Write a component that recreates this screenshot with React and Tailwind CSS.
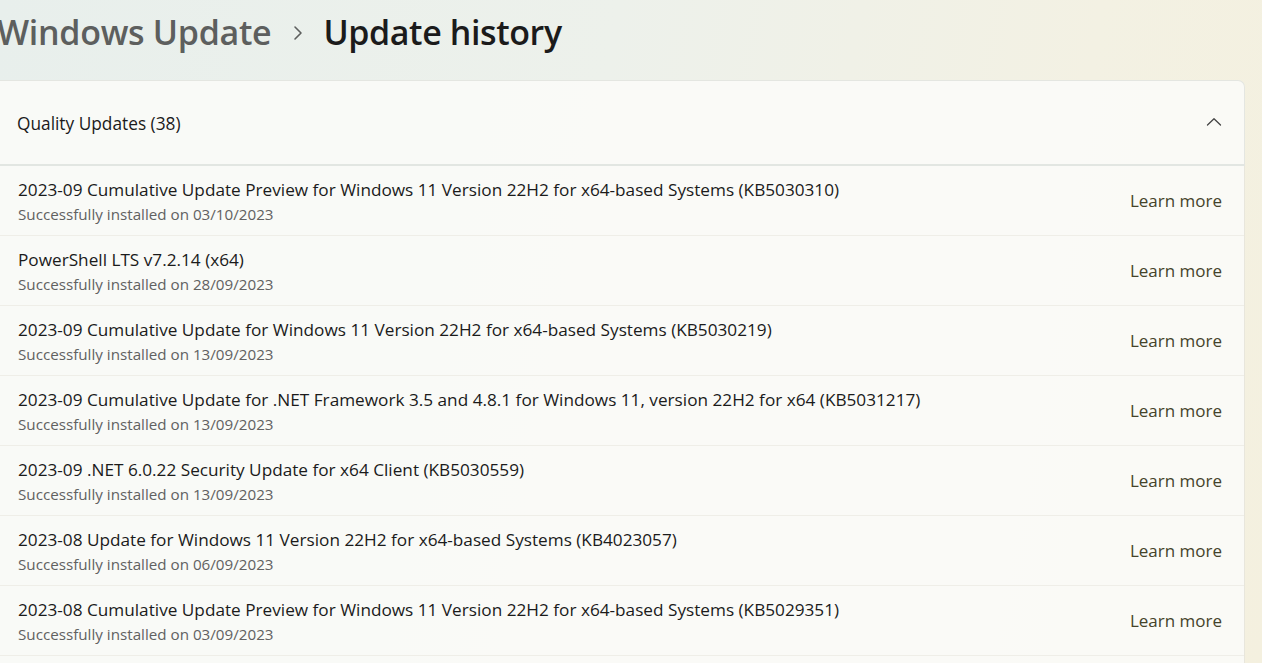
import React from "react";

const rows = [
  ["2023-09 Cumulative Update Preview for Windows 11 Version 22H2 for x64-based Systems (KB5030310)", "03/10/2023"],
  ["PowerShell LTS v7.2.14 (x64)", "28/09/2023"],
  ["2023-09 Cumulative Update for Windows 11 Version 22H2 for x64-based Systems (KB5030219)", "13/09/2023"],
  ["2023-09 Cumulative Update for .NET Framework 3.5 and 4.8.1 for Windows 11, version 22H2 for x64 (KB5031217)", "13/09/2023"],
  ["2023-09 .NET 6.0.22 Security Update for x64 Client (KB5030559)", "13/09/2023"],
  ["2023-08 Update for Windows 11 Version 22H2 for x64-based Systems (KB4023057)", "06/09/2023"],
  ["2023-08 Cumulative Update Preview for Windows 11 Version 22H2 for x64-based Systems (KB5029351)", "03/09/2023"],
  ["2023-08 Cumulative Update for Windows 11 Version 22H2 for x64-based Systems (KB5029263)", "09/08/2023"],
];

export default function App() {
  return (
    <div
      className="w-[1262px] h-[663px] overflow-hidden bg-[linear-gradient(100deg,#e8efec_0%,#edf1eb_45%,#f3f1e3_80%,#f4f0df_100%)]"
      style={{ fontFamily: '"Open Sans", "Noto Sans", sans-serif' }}
    >
      <div className="h-[80px] flex items-center -ml-[3px] pb-[16px]">
        <span className="text-[34px] font-semibold text-[#5d5f5e] tracking-[-0.3px]">Windows Update</span>
        <svg className="ml-[22px] mr-[20px] mt-[2px]" width="10" height="16" viewBox="0 0 10 16">
          <path d="M2 2 L8 8 L2 14" fill="none" stroke="#5d5f5e" strokeWidth="1.6" strokeLinecap="round" strokeLinejoin="round" />
        </svg>
        <span className="text-[34px] font-semibold text-[#1b1b1b] tracking-[-0.4px]">Update history</span>
      </div>
      <div className="-ml-[8px] w-[1253px]">
        <div className="h-[86px] flex items-center justify-between pl-[24px] pr-[22px] bg-[#fbfbf8]/90 border border-[#e4e6e1] rounded-tr-[7px] border-b-[2px] border-b-[#e2e6e2]">
          <span className="text-[17.3px] text-[#1b1b1b] pt-[2px]">Quality Updates (38)</span>
          <svg width="16" height="10" viewBox="0 0 16 10" className="mb-[2px]">
            <path d="M1.5 8 L8 1.8 L14.5 8" fill="none" stroke="#444" strokeWidth="1.3" strokeLinecap="round" strokeLinejoin="round" />
          </svg>
        </div>
        <div className="bg-[#fbfbf8]/90 border-r border-[#e8e6dc]">
          {rows.map(([t, d], i) => (
            <div key={i} className="h-[70px] flex items-center justify-between pl-[26px] pr-[22px] border-b border-[#efeee8]">
              <div className="flex flex-col pt-[2px]">
                <span className="text-[17.2px] leading-[24px] text-[#1b1b1b]">{t}</span>
                <span className="text-[15.2px] leading-[24px] text-[#616161]">Successfully installed on {d}</span>
              </div>
              <span className="text-[17px] text-[#45432a] pt-[1px]">Learn more</span>
            </div>
          ))}
        </div>
      </div>
    </div>
  );
}
